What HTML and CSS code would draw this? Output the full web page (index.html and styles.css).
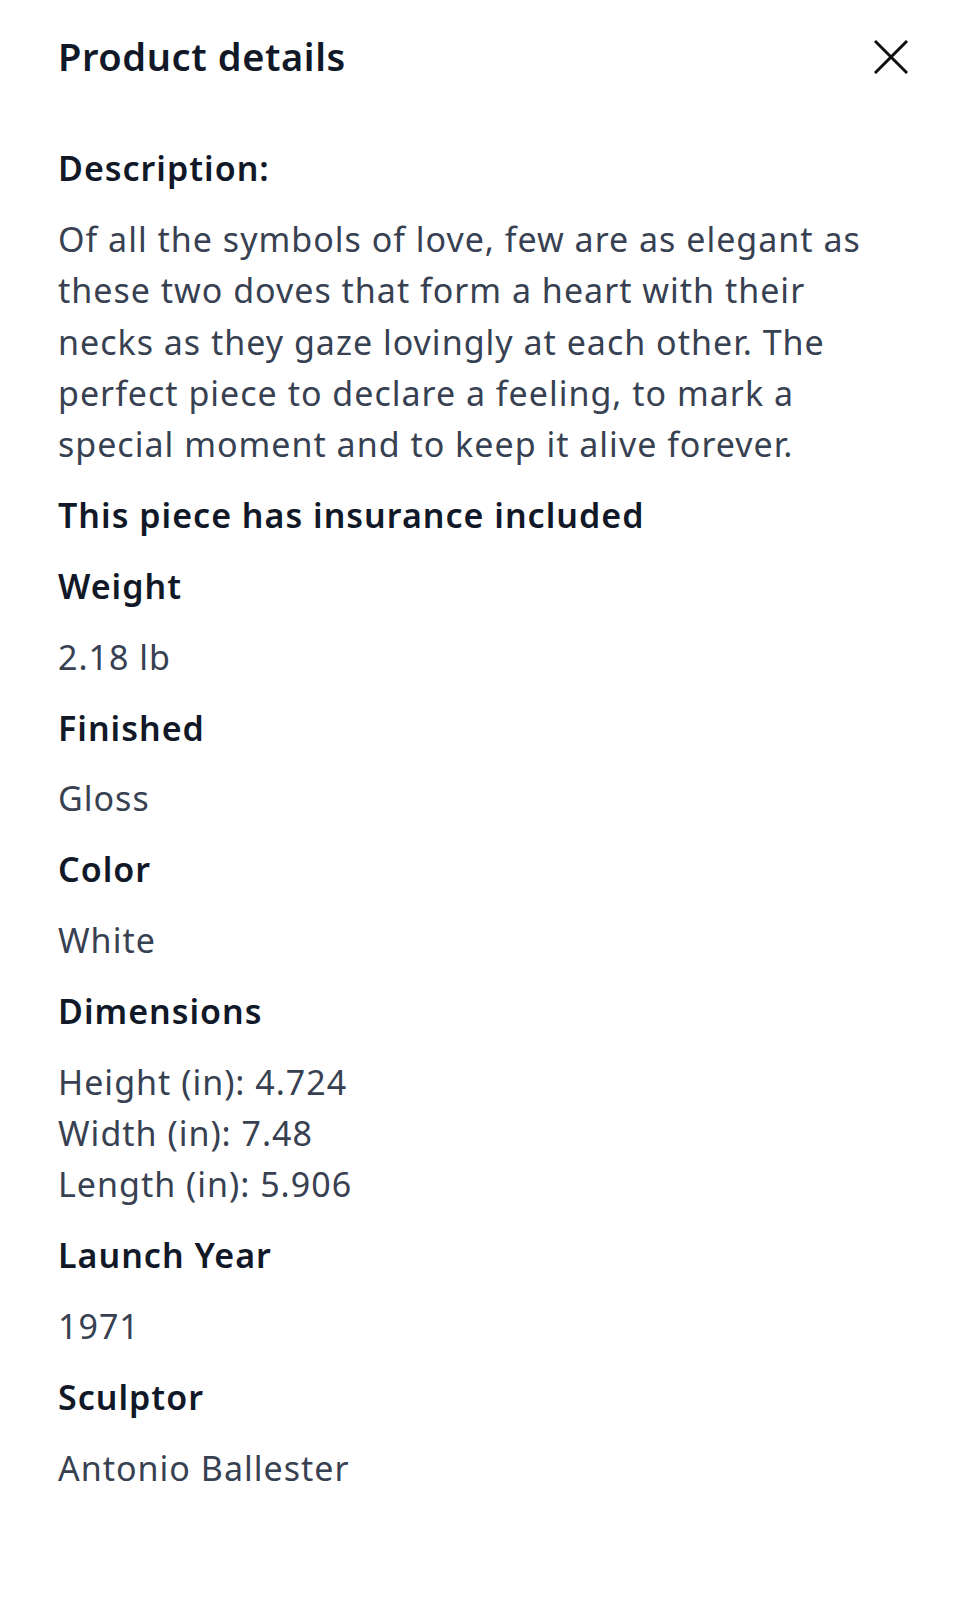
FILE: index.html
```html
<!DOCTYPE html>
<html lang="en">
<head>
<meta charset="utf-8">
<title>Product details</title>
<link rel="stylesheet" href="styles.css">
</head>
<body>
<div class="panel">
  <header class="panel-header">
    <h1 class="panel-title">Product details</h1>
    <button class="close-btn" aria-label="Close">
      <svg width="34" height="34" viewBox="0 0 34 34" fill="none" stroke="#111" stroke-width="3" stroke-linecap="square">
        <path d="M2 2 L32 32 M32 2 L2 32"/>
      </svg>
    </button>
  </header>
  <section class="details">
    <h2 class="label">Description:</h2>
    <p class="value">Of all the symbols of love, few are as elegant as these two doves that form a heart with their necks as they gaze lovingly at each other. The perfect piece to declare a feeling, to mark a special moment and to keep it alive forever.</p>
    <h2 class="label">This piece has insurance included</h2>
    <h2 class="label">Weight</h2>
    <p class="value">2.18 lb</p>
    <h2 class="label">Finished</h2>
    <p class="value">Gloss</p>
    <h2 class="label">Color</h2>
    <p class="value">White</p>
    <h2 class="label">Dimensions</h2>
    <p class="value">Height (in): 4.724<br>Width (in): 7.48<br>Length (in): 5.906</p>
    <h2 class="label">Launch Year</h2>
    <p class="value">1971</p>
    <h2 class="label">Sculptor</h2>
    <p class="value">Antonio Ballester</p>
  </section>
</div>
</body>
</html>
```

FILE: styles.css
```css
* { box-sizing: border-box; }
html, body {
  margin: 0;
  padding: 0;
  background: #ffffff;
}
body {
  font-family: "Noto Sans", "Open Sans", sans-serif;
  color: #111827;
}
.panel {
  padding: 0 52px 0 58px;
}
.panel-header {
  display: flex;
  align-items: center;
  justify-content: space-between;
  height: 113px;
}
.panel-title {
  margin: 0;
  font-size: 38px;
  font-weight: 600;
  line-height: 1.2;
  letter-spacing: 0.6px;
  color: #111827;
}
.close-btn {
  display: flex;
  align-items: center;
  justify-content: center;
  width: 34px;
  height: 34px;
  padding: 0;
  border: 0;
  background: none;
}
.details {
  display: flex;
  flex-direction: column;
  gap: 19.4px;
  padding-top: 30px;
  padding-right: 34px;
}
.label {
  margin: 0;
  font-size: 34px;
  font-weight: 600;
  line-height: 51.4px;
  letter-spacing: 1px;
  color: #111827;
}
.value {
  margin: 0;
  font-size: 34px;
  font-weight: 400;
  line-height: 51.4px;
  letter-spacing: 1px;
  color: #374151;
}
```
